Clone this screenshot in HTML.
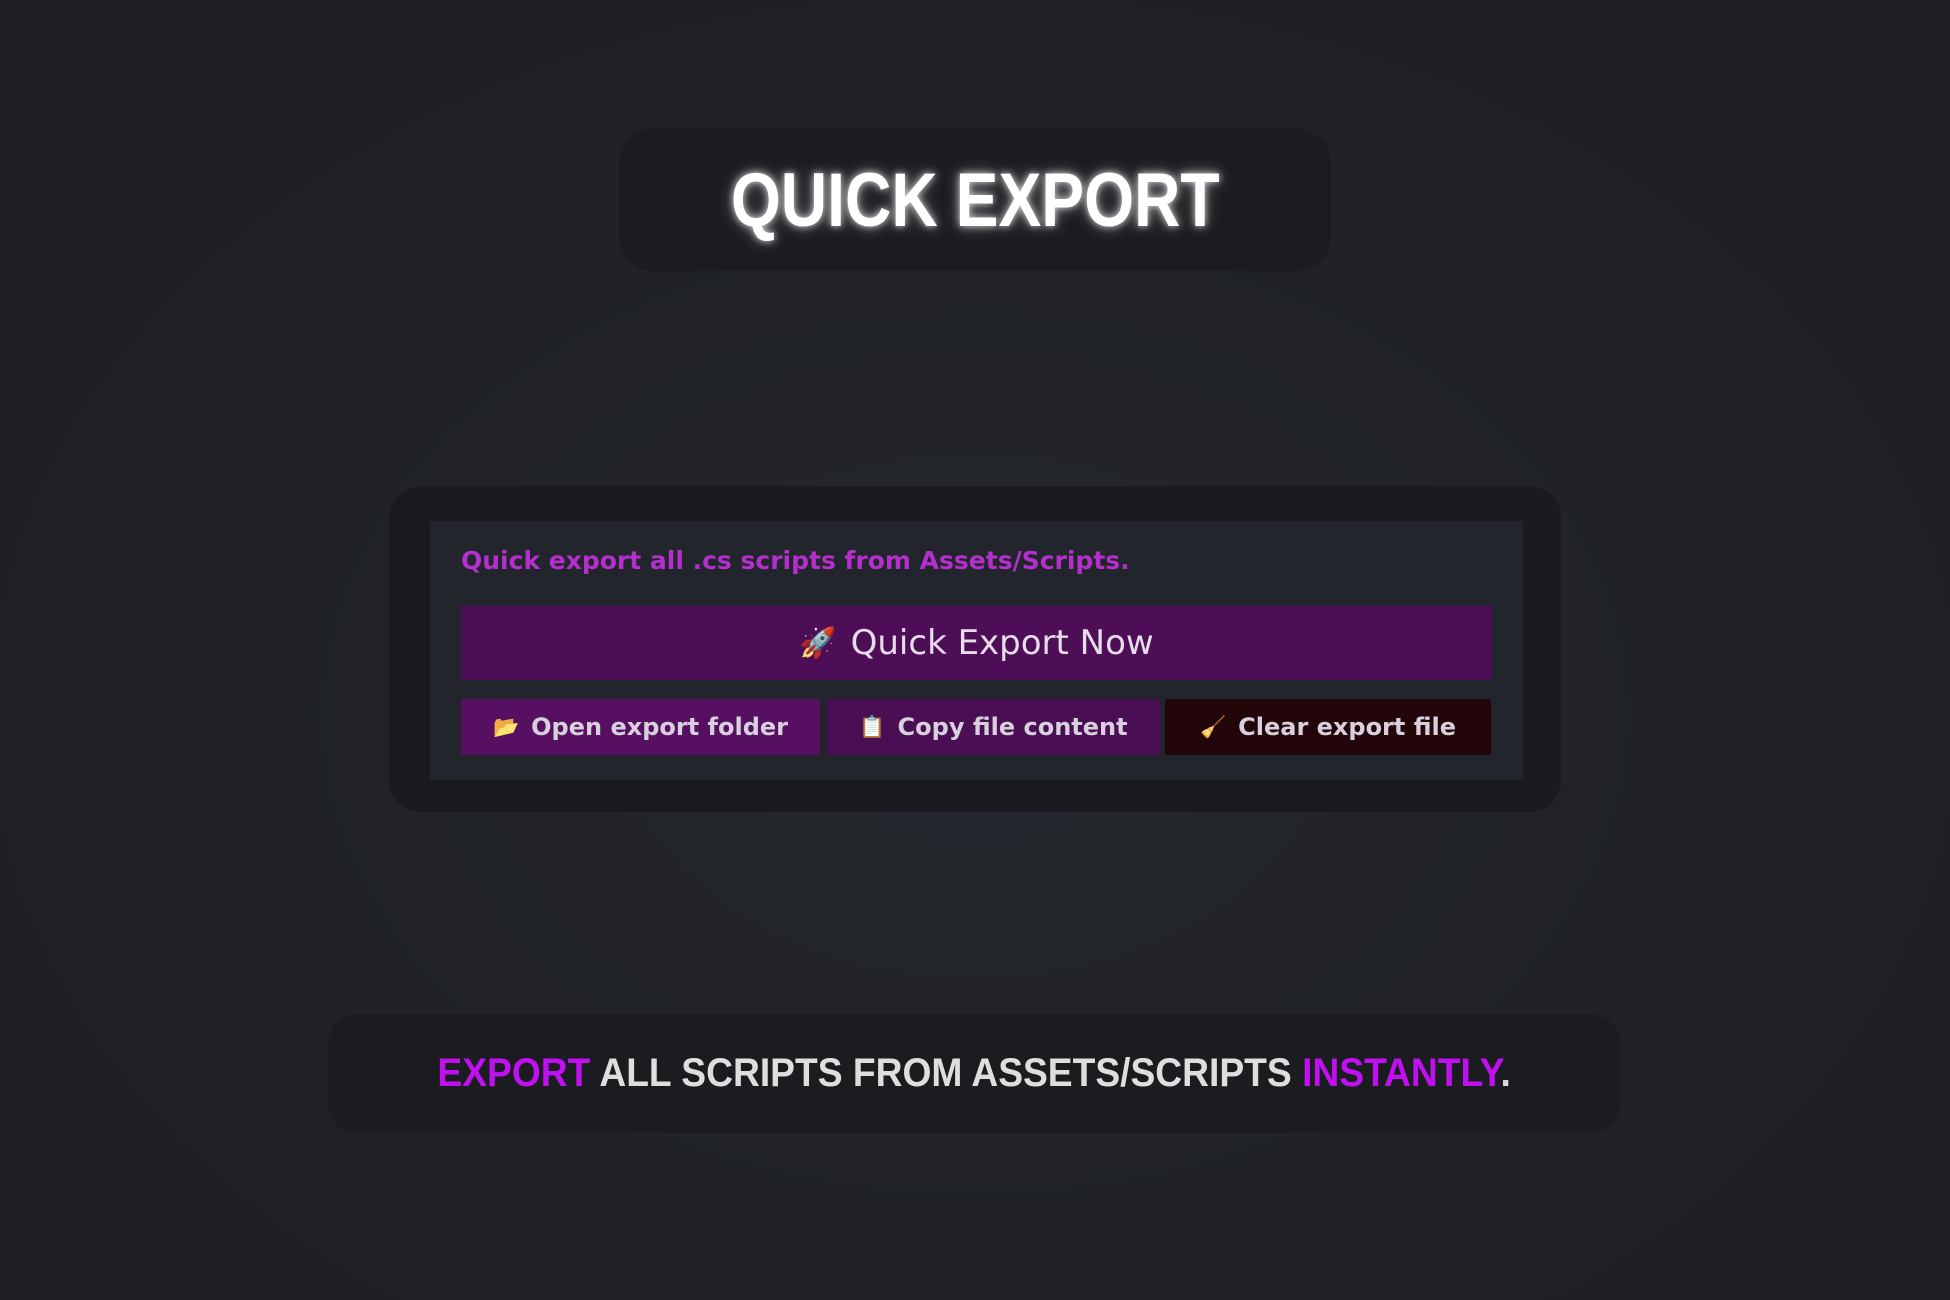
<!DOCTYPE html>
<html><head><meta charset="utf-8"><style>
html,body{margin:0;padding:0}
body{width:1950px;height:1300px;overflow:hidden;position:relative;background:radial-gradient(ellipse at 50% 55%,#24272d 0%,#202226 55%,#1c1e22 100%);font-family:"Liberation Sans",sans-serif}
.title{position:absolute;left:619px;top:129px;width:712px;height:142px;background:#1b1c20;border-radius:34px;display:flex;align-items:center;justify-content:center}
.title span{font-weight:bold;font-size:76px;color:#fff;transform:scaleX(0.845);display:inline-block;text-shadow:0 0 8px rgba(255,255,255,.8),0 0 18px rgba(255,255,255,.4);white-space:nowrap}
.outer{position:absolute;left:389px;top:486px;width:1172px;height:326px;background:#1a1b1f;border-radius:32px}
.inner{position:absolute;left:430px;top:521px;width:1093px;height:259px;background:#23252c}
.desc{position:absolute;left:461px;top:546px;font-family:"DejaVu Sans",sans-serif;font-size:25px;color:#b42fce;font-weight:bold;white-space:nowrap}
.big{position:absolute;left:461px;top:606px;width:1031px;height:74px;background:#4d0e57;display:flex;align-items:center;justify-content:center;font-family:"DejaVu Sans",sans-serif;font-size:34px;color:#e6dcea;border-radius:2px}
.btn{position:absolute;top:699px;height:56px;display:flex;align-items:center;justify-content:center;font-family:"DejaVu Sans",sans-serif;font-size:24px;font-weight:bold;color:#d8d0dc;border-radius:2px;white-space:nowrap}
.ic{font-size:21px;margin-right:12px}
.bottom{position:absolute;left:328px;top:1014px;width:1292px;height:119px;background:#1b1c20;border-radius:30px;display:flex;align-items:center;justify-content:center}
.bottom span.t{font-size:40px;font-weight:bold;color:#dedede;white-space:nowrap;transform:scaleX(0.93);display:inline-block}
.p{color:#c010ef}
</style></head><body>
<div class="title"><span>QUICK EXPORT</span></div>
<div class="outer"></div>
<div class="inner"></div>
<div class="desc">Quick export all .cs scripts from Assets/Scripts.</div>
<div class="big"><span style="font-size:30px;margin-right:14px">🚀</span>Quick Export Now</div>
<div class="btn" style="left:461px;width:359px;background:#560f61"><span class="ic">📂</span>Open export folder</div>
<div class="btn" style="left:827px;width:333px;background:#4a0e55"><span class="ic">📋</span>Copy file content</div>
<div class="btn" style="left:1165px;width:326px;background:#22060a"><span class="ic">🧹</span>Clear export file</div>
<div class="bottom"><span class="t"><span class="p">EXPORT</span> ALL SCRIPTS FROM ASSETS/SCRIPTS <span class="p">INSTANTLY</span>.</span></div>
</body></html>
